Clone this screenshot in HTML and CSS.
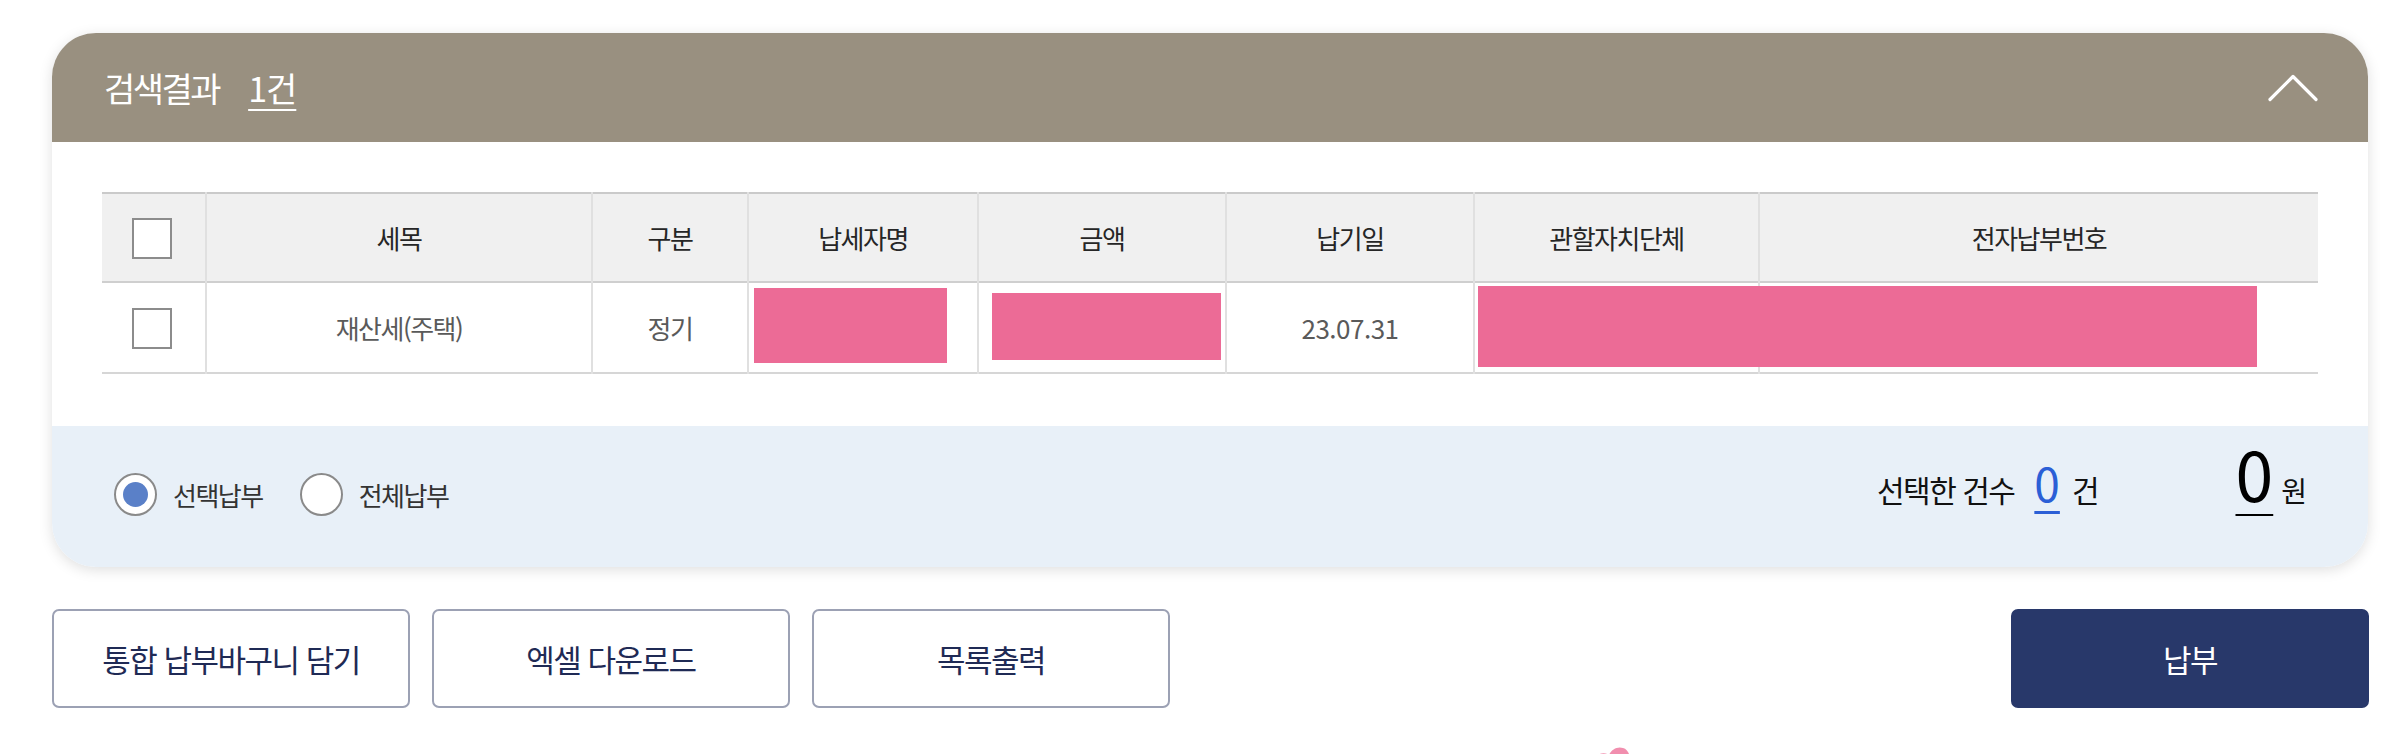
FILE: index.html
```html
<!DOCTYPE html>
<html lang="ko">
<head>
<meta charset="utf-8">
<title>검색결과</title>
<link rel="stylesheet" href="styles.css">
</head>
<body>
<div class="page">
  <section class="card">
    <header class="card-head">
      <h2 class="title">검색결과 <span class="count">1건</span></h2>
      <svg class="chev" width="50" height="28" viewBox="0 0 50 28" aria-hidden="true">
        <polyline points="2,25.5 25,2.5 48,25.5" fill="none" stroke="#ffffff" stroke-width="3.2" stroke-linecap="round" stroke-linejoin="round"/>
      </svg>
    </header>
    <div class="card-body">
      <table class="grid">
        <colgroup>
          <col class="c1"><col class="c2"><col class="c3"><col class="c4"><col class="c5"><col class="c6"><col class="c7"><col class="c8">
        </colgroup>
        <thead>
          <tr>
            <th><span class="chk"></span></th>
            <th>세목</th>
            <th>구분</th>
            <th>납세자명</th>
            <th>금액</th>
            <th>납기일</th>
            <th>관할자치단체</th>
            <th>전자납부번호</th>
          </tr>
        </thead>
        <tbody>
          <tr>
            <td><span class="chk"></span></td>
            <td>재산세(주택)</td>
            <td>정기</td>
            <td class="rel"><span class="redact r1"></span></td>
            <td class="rel"><span class="redact r2"></span></td>
            <td class="date">23.07.31</td>
            <td class="rel"><span class="redact r3"></span></td>
            <td></td>
          </tr>
        </tbody>
      </table>
    </div>
    <footer class="card-foot">
      <div class="radios">
        <label class="radio"><span class="dot on"></span><span class="rlabel">선택납부</span></label>
        <label class="radio"><span class="dot"></span><span class="rlabel">전체납부</span></label>
      </div>
      <div class="summary">
        <span class="sel-label">선택한 건수</span>
        <span class="sel-num">0</span>
        <span class="sel-unit">건</span>
        <span class="amt-num">0</span>
        <span class="amt-unit">원</span>
      </div>
    </footer>
  </section>

  <div class="actions">
    <div class="left-btns">
      <button class="btn">통합 납부바구니 담기</button>
      <button class="btn">엑셀 다운로드</button>
      <button class="btn">목록출력</button>
    </div>
    <button class="btn pay">납부</button>
  </div>

  <div class="deco">
    <svg width="40" height="12" viewBox="0 0 40 12" aria-hidden="true">
      <path d="M2 12 C6 8 12 7 16 10 C18 5 24 1 30 3 C34 4 36 8 37 12 Z" fill="#ef7aa0" opacity="0.85"/>
    </svg>
  </div>
</div>
</body>
</html>
```

FILE: styles.css
```css
* { box-sizing: border-box; }

html, body {
  margin: 0;
  padding: 0;
  background: #ffffff;
}

body {
  font-family: "Noto Sans CJK KR", "Noto Sans", sans-serif;
  color: #222;
  overflow: hidden;
}

.page {
  width: 2406px;
  height: 754px;
  padding: 33px 38px 0 52px;
}

.card {
  width: 2316px;
  border-radius: 44px;
  overflow: hidden;
  background: #ffffff;
  box-shadow: 0 3px 14px rgba(0, 0, 0, 0.13);
}

.card-head {
  height: 109px;
  background: #999080;
  display: flex;
  align-items: center;
  justify-content: space-between;
  padding: 0 50px 0 52px;
}

.title {
  margin: 0;
  font-size: 34px;
  font-weight: 400;
  letter-spacing: -2.5px;
  color: #ffffff;
  line-height: 1;
}

.count {
  margin-left: 22px;
  letter-spacing: -1px;
  text-decoration: underline;
  text-decoration-thickness: 2px;
  text-underline-offset: 7px;
}

.chev { display: block; }

.card-body {
  padding: 50px 49px 52px 50px;
}

.grid {
  width: 2216px;
  border-collapse: collapse;
  table-layout: fixed;
}

.c1 { width: 104px; }
.c2 { width: 386px; }
.c3 { width: 156px; }
.c4 { width: 230px; }
.c5 { width: 248px; }
.c6 { width: 248px; }
.c7 { width: 285px; }
.c8 { width: 559px; }

.grid th,
.grid td {
  border-left: 2px solid #e0e0e0;
  text-align: center;
  vertical-align: middle;
  padding: 0;
}

.grid th:first-child,
.grid td:first-child { border-left: none; }

.grid thead tr {
  border-top: 2px solid #cacaca;
  border-bottom: 2px solid #cfcfcf;
}

.grid th {
  height: 89px;
  background: #f0f0f0;
  font-size: 26px;
  font-weight: 400;
  letter-spacing: -1.5px;
  color: #262626;
}

.grid tbody tr { border-bottom: 2px solid #d6d6d6; }

.grid td {
  height: 91px;
  font-size: 26px;
  letter-spacing: -1.5px;
  color: #5a5a5a;
}

.grid td.date { letter-spacing: -0.5px; }

.chk {
  display: inline-block;
  width: 40px;
  height: 41px;
  border: 2px solid #8c8c8c;
  background: #ffffff;
  vertical-align: middle;
  margin-right: 4px;
}

.rel { position: relative; }

.redact {
  position: absolute;
  background: #ec6b96;
}

.r1 { left: 5px; top: 5px; width: 193px; height: 75px; }
.r2 { left: 13px; top: 10px; width: 229px; height: 67px; }
.r3 { left: 3px; top: 3px; width: 779px; height: 81px; z-index: 1; }

.card-foot {
  height: 141px;
  background: #e8f0f8;
  display: flex;
  align-items: center;
  justify-content: space-between;
  padding: 0 61px 0 62px;
}

.radios {
  display: flex;
  align-items: center;
  gap: 37px;
  margin-top: -4px;
}

.radio {
  display: flex;
  align-items: center;
  gap: 16px;
}

.dot {
  width: 43px;
  height: 43px;
  border-radius: 50%;
  border: 2px solid #8a8a8a;
  background: #ffffff;
  display: flex;
  align-items: center;
  justify-content: center;
}

.dot.on::after {
  content: "";
  width: 25px;
  height: 25px;
  border-radius: 50%;
  background: #5a80c8;
}

.rlabel {
  font-size: 26px;
  letter-spacing: -1.5px;
  color: #333;
}

.summary {
  display: flex;
  align-items: baseline;
  color: #111;
  margin-top: -44px;
}

.sel-label {
  font-size: 30px;
  letter-spacing: -1.5px;
}

.sel-num {
  font-size: 46px;
  line-height: 1;
  color: #2b5fd6;
  margin-left: 20px;
  text-decoration: underline;
  text-decoration-thickness: 3px;
  text-underline-offset: 9px;
}

.sel-unit {
  font-size: 30px;
  margin-left: 12px;
}

.amt-num {
  font-size: 68px;
  line-height: 1;
  color: #000;
  margin-left: 136px;
  text-decoration: underline;
  text-decoration-thickness: 2px;
  text-underline-offset: 12px;
}

.amt-unit {
  font-size: 28px;
  margin-left: 8px;
}

.actions {
  width: 2317px;
  margin-top: 42px;
  display: flex;
  justify-content: space-between;
}

.left-btns {
  display: flex;
  gap: 22px;
}

.btn {
  width: 358px;
  height: 99px;
  border: 2px solid #9ca1b4;
  border-radius: 7px;
  background: #ffffff;
  font-family: "Noto Sans CJK KR", "Noto Sans", sans-serif;
  font-size: 31px;
  font-weight: 400;
  letter-spacing: -1.5px;
  color: #1f2a55;
  padding: 0;
}

.btn.pay {
  background: #28386a;
  border-color: #28386a;
  color: #ffffff;
}

.deco {
  margin-top: 37px;
  padding-left: 1541px;
  height: 12px;
}

.deco svg { display: block; }
```
